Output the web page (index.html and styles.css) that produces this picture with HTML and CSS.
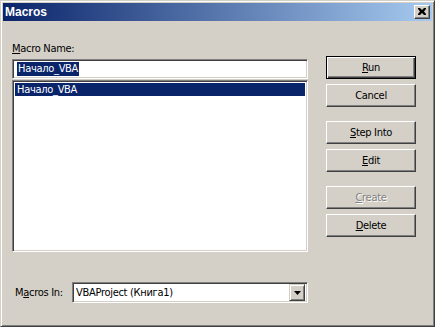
FILE: index.html
```html
<!DOCTYPE html>
<html lang="ru">
<head>
    <meta charset="UTF-8">
    <title>Macros</title>
    <link rel="stylesheet" href="styles.css">
</head>
<body>

<div class="window">
    <div class="titlebar">
        <span class="title">Macros</span>
        <span class="close">
            <svg width="8" height="7" viewBox="0 0 8 7">
                <path d="M0 0h2l2 2 2-2h2v1l-2 2.5 2 2.5v1h-2l-2-2-2 2h-2v-1l2-2.5-2-2.5z" fill="#000"/>
            </svg>
        </span>
    </div>

    <div class="body">
        <div class="main">
            <div class="field-label"><u>M</u>acro Name:</div>
            <div class="textbox"><span class="sel">Начало_VBA</span></div>
            <div class="listbox">
                <div class="item selected">Начало_VBA</div>
            </div>
            <div class="source-row">
                <span class="field-label">M<u>a</u>cros In:</span>
                <div class="combo">
                    <span class="combo-text">VBAProject (Книга1)</span>
                    <span class="combo-btn">
                        <svg width="7" height="4" viewBox="0 0 7 4"><path d="M0 0h7l-3.5 4z" fill="#000"/></svg>
                    </span>
                </div>
            </div>
        </div>

        <div class="buttons">
            <button class="btn default"><u>R</u>un</button>
            <button class="btn">Cancel</button>
            <button class="btn spaced"><u>S</u>tep Into</button>
            <button class="btn"><u>E</u>dit</button>
            <button class="btn spaced disabled"><u>C</u>reate</button>
            <button class="btn"><u>D</u>elete</button>
        </div>
    </div>
</div>

</body>
</html>
```

FILE: styles.css
```css
body {
    margin: 0;
    background: #d4d0c8;
    font-family: "DejaVu Sans Condensed", "Liberation Sans", Arial, sans-serif;
    font-size: 11px;
    letter-spacing: -0.3px;
    color: #000;
}
u {
    text-decoration: underline;
    text-underline-offset: 1px;
}
.window {
    width: 435px;
    height: 327px;
    box-sizing: border-box;
    border: 1px solid;
    border-color: #d4d0c8 #404040 #404040 #d4d0c8;
    box-shadow: inset 1px 1px #fff, inset -1px -1px #808080;
    padding: 2px;
    background: #d4d0c8;
}
.titlebar {
    height: 18px;
    background: linear-gradient(to right, #0a246a, #a6caf0);
    display: flex;
    align-items: center;
    justify-content: space-between;
    padding: 0 2px 0 2px;
}
.title {
    color: #fff;
    font-family: "Liberation Sans", Arial, sans-serif;
    font-weight: bold;
    font-size: 12px;
    letter-spacing: 0;
}
.close {
    width: 16px;
    height: 14px;
    box-sizing: border-box;
    background: #d4d0c8;
    border: 1px solid;
    border-color: #fff #404040 #404040 #fff;
    box-shadow: inset -1px -1px #808080;
    display: flex;
    align-items: center;
    justify-content: center;
    padding: 0 1px 1px 0;
}
.body {
    display: flex;
    gap: 18px;
    padding-left: 9px;
}
.main {
    width: 296px;
    padding-top: 21px;
}
.field-label {
    line-height: 13px;
    height: 13px;
}
.textbox, .listbox, .combo {
    box-sizing: border-box;
    background: #fff;
    border: 1px solid;
    border-color: #808080 #fff #fff #808080;
    box-shadow: inset 1px 1px #404040, inset -1px -1px #d4d0c8;
    padding: 2px;
}
.textbox {
    margin-top: 4px;
    height: 20px;
    padding-left: 4px;
}
.sel {
    display: inline-block;
    background: #0a246a;
    color: #fff;
    line-height: 14px;
    padding: 0 1px;
}
.listbox {
    margin-top: 1px;
    height: 172px;
}
.item {
    line-height: 13px;
    padding-left: 2px;
}
.item.selected {
    background: #0a246a;
    color: #fff;
}
.source-row {
    margin-top: 30px;
    display: flex;
    align-items: center;
}
.source-row .field-label {
    padding-left: 3px;
}
.combo {
    margin-left: auto;
    width: 236px;
    height: 21px;
    display: flex;
    align-items: center;
    justify-content: space-between;
    padding: 2px 2px 2px 3px;
}
.combo-btn {
    width: 16px;
    height: 17px;
    box-sizing: border-box;
    background: #d4d0c8;
    border: 1px solid;
    border-color: #d4d0c8 #404040 #404040 #d4d0c8;
    box-shadow: inset 1px 1px #fff, inset -1px -1px #808080;
    display: flex;
    align-items: center;
    justify-content: center;
}
.buttons {
    padding-top: 35px;
    display: flex;
    flex-direction: column;
    gap: 5px;
}
.btn {
    width: 90px;
    height: 23px;
    box-sizing: border-box;
    background: #d4d0c8;
    border: 1px solid;
    border-color: #fff #404040 #404040 #fff;
    box-shadow: inset -1px -1px #808080;
    font-family: inherit;
    font-size: 11px;
    letter-spacing: -0.3px;
    color: #000;
    padding: 0;
}
.btn.default {
    border: 1px solid #000;
    box-shadow: inset 1px 1px #fff, inset -1px -1px #404040, inset -2px -2px #808080;
}
.btn.spaced {
    margin-top: 9px;
}
.btn.disabled {
    color: #808080;
    text-shadow: 1px 1px #fff;
}
```
